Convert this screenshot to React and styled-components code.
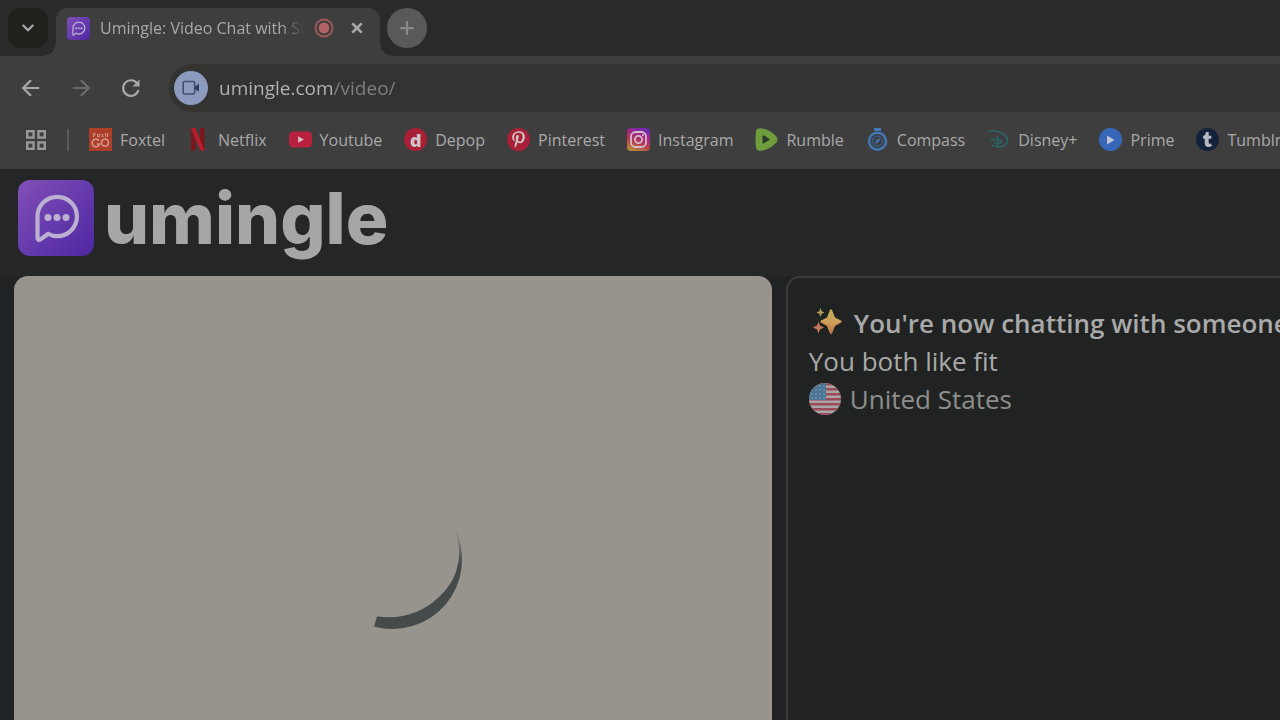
import React from "react";
import styled, { createGlobalStyle } from "styled-components";
import { FaPinterestP, FaTumblr } from "react-icons/fa";

const GlobalStyle = createGlobalStyle`
  *, *::before, *::after { box-sizing: border-box; }
  body {
    margin: 0;
    background: #242628;
    color: #a9a9a9;
    font-family: "Open Sans", "Noto Sans", sans-serif;
    overflow: hidden;
  }
  button { font: inherit; color: inherit; border: 0; padding: 0; cursor: pointer; }
  svg { display: block; flex: none; }
`;

const Page = styled.div`
  display: flex;
  flex-direction: column;
  min-height: 100vh;
`;

/* ---------- browser chrome ---------- */

const TabStrip = styled.div`
  display: flex;
  align-items: flex-end;
  height: 56px;
  padding-left: 8px;
  background: #2a2a2a;
`;

const TabSearch = styled.button`
  display: grid;
  place-items: center;
  width: 40px;
  height: 40px;
  margin: 0 8px 8px 0;
  border-radius: 12px;
  background: #21211e;
`;

const Tab = styled.div`
  position: relative;
  display: flex;
  align-items: center;
  gap: 10px;
  width: 324px;
  height: 48px;
  padding: 0 10px 8px 11px;
  border-radius: 12px 12px 0 0;
  background: #3e3e3e;

  &::before,
  &::after {
    content: "";
    position: absolute;
    bottom: 0;
    width: 12px;
    height: 12px;
  }
  &::before {
    left: -12px;
    background: radial-gradient(circle at 0 0, transparent 11px, #3e3e3e 12px);
  }
  &::after {
    right: -12px;
    background: radial-gradient(circle at 100% 0, transparent 11px, #3e3e3e 12px);
  }
`;

const TabTitle = styled.span`
  flex: 1;
  min-width: 0;
  overflow: hidden;
  white-space: nowrap;
  font-size: 16px;
  line-height: 24px;
  font-weight: 500;
  mask-image: linear-gradient(to right, #000 88%, transparent 100%);
`;

const IconButton = styled.button`
  display: grid;
  place-items: center;
  flex: none;
  width: ${(p) => p.$size}px;
  height: ${(p) => p.$size}px;
  border-radius: 50%;
  background: ${(p) => p.$fill || "transparent"};
  color: ${(p) => p.$tone || "#a9a9a9"};
`;

const NewTabSlot = styled.div`
  margin: 0 0 8px 7px;
`;

const Toolbar = styled.div`
  display: flex;
  align-items: center;
  gap: 10px;
  height: 64px;
  padding: 8px 0 8px 11px;
  background: #3e3e3e;
`;

const AddressBar = styled.div`
  display: flex;
  align-items: center;
  flex: 1;
  height: 48px;
  margin-left: 8px;
  padding-left: 5px;
  border-radius: 24px 0 0 24px;
  background: #333431;
`;

const AddressInput = styled.input`
  flex: 1;
  min-width: 0;
  height: 32px;
  margin-left: 11px;
  padding: 0;
  border: 0;
  outline: 0;
  font: 500 19px/32px "Open Sans", "Noto Sans", sans-serif;
  color: transparent;
  background: linear-gradient(to right, #b4b4b4 115px, #80807e 115px);
  background-clip: text;
  -webkit-background-clip: text;
`;

const Bookmarks = styled.nav`
  display: flex;
  align-items: center;
  gap: 20px;
  height: 49px;
  padding: 0 0 10px 25px;
  overflow: hidden;
  background: #3e3e3e;
`;

const BookmarkList = styled.div`
  display: flex;
  align-items: center;
  gap: 22px;
`;

const Divider = styled.span`
  flex: none;
  width: 2px;
  height: 22px;
  background: #595959;
`;

const Bookmark = styled.a`
  display: flex;
  align-items: center;
  flex: none;
  gap: 8px;
  color: #a9a9a9;
  font-size: 16px;
  line-height: 24px;
  font-weight: 500;
  text-decoration: none;
`;

const Badge = styled.span`
  display: grid;
  place-items: center;
  width: 23px;
  height: 23px;
  border-radius: 50%;
  background: ${(p) => p.$fill};
  color: ${(p) => p.$tone || "#cfc3c5"};
  font-size: 18px;
  line-height: 20px;
  font-weight: 800;
`;

/* ---------- site ---------- */

const SiteHeader = styled.header`
  display: flex;
  align-items: center;
  gap: 10px;
  height: 107px;
  padding: 0 18px 9px;
  background: #242628;
`;

const Wordmark = styled.h1`
  margin: 0;
  color: #a6a6a6;
  font: 800 71px/84px Inter, sans-serif;
`;

const Panels = styled.main`
  display: grid;
  grid-template-columns: 23fr 15fr;
  gap: 14px;
  flex: 1;
  padding-left: 14px;
  background: #202223;
`;

const VideoPanel = styled.section`
  display: flex;
  justify-content: center;
  padding-top: 215px;
  border-radius: 14px 14px 0 0;
  background: #97938d;
`;

const ChatPanel = styled.section`
  min-width: 0;
  padding: 26px 0 0 21px;
  overflow: hidden;
  border: solid #3b3d3d;
  border-width: 2px 0 0 2px;
  border-radius: 14px 0 0 0;
  background: #212322;
`;

const ChatLine = styled.p`
  display: flex;
  align-items: center;
  gap: ${(p) => p.$gap || 0}px;
  margin: 0;
  padding-left: ${(p) => p.$indent || 0}px;
  color: ${(p) => p.$tone || "#a9a9a9"};
  font-size: 26px;
  font-weight: ${(p) => p.$weight || 400};
  line-height: 38px;
  white-space: nowrap;
`;

/* ---------- drawings ---------- */

const ChatLogo = ({ size, id }) => (
  <svg width={size} height={size} viewBox="0 0 76 76" aria-hidden="true">
    <defs>
      <linearGradient id={id} x1="0" y1="0" x2="1" y2="1">
        <stop offset="0" stopColor="#8250b8" />
        <stop offset="0.5" stopColor="#663bad" />
        <stop offset="1" stopColor="#4f26a0" />
      </linearGradient>
    </defs>
    <rect width="76" height="76" rx="12" fill={`url(#${id})`} />
    <path
      d="M19.500 58V36.500a19.700 19.700 0 1 1 19.700 19.700c-3.500 0-6-.7-9-2.500L22.500 59.400Q19.500 61 19.500 58Z"
      fill="none"
      stroke="#bcb0d0"
      strokeWidth="4.200"
      strokeLinejoin="round"
    />
    <circle cx="30" cy="37.500" r="3.500" fill="#bcb0d0" />
    <circle cx="39" cy="37.500" r="3.500" fill="#bcb0d0" />
    <circle cx="48" cy="37.500" r="3.500" fill="#bcb0d0" />
  </svg>
);

const Stroke = ({ size = 22, d, width = 2 }) => (
  <svg width={size} height={size} viewBox="0 0 24 24" fill="none" stroke="currentColor" strokeWidth={width} aria-hidden="true">
    <path d={d} />
  </svg>
);

const Recording = () => (
  <svg width="20" height="20" viewBox="0 0 20 20" aria-hidden="true">
    <circle cx="10" cy="10" r="8.500" fill="none" stroke="#9f5a5d" strokeWidth="1.800" />
    <circle cx="10" cy="10" r="5.400" fill="#b36366" />
  </svg>
);

const ReloadIcon = () => (
  <svg width="24" height="24" viewBox="0 0 24 24" fill="none" aria-hidden="true">
    <path d="M18.300 7.500A7.800 7.800 0 1 0 19.500 14" stroke="currentColor" strokeWidth="2.200" />
    <path d="M20.500 3.500v7h-7Z" fill="currentColor" />
  </svg>
);

const CameraIcon = () => (
  <svg width="18" height="16" viewBox="0 0 18 16" aria-hidden="true">
    <rect x="1.200" y="1.500" width="11.500" height="12.500" rx="1.500" fill="none" stroke="#3f4f73" strokeWidth="1.600" />
    <path d="M12.500 7 17 3.800v8L12.500 8.800Z" fill="#2c3b60" />
  </svg>
);

const AppsIcon = () => (
  <svg width="22" height="22" viewBox="0 0 22 22" fill="none" stroke="#999" strokeWidth="2.400" aria-hidden="true">
    <rect x="2.200" y="2.200" width="6.400" height="6.400" />
    <rect x="13.400" y="2.200" width="6.400" height="6.400" />
    <rect x="2.200" y="13.400" width="6.400" height="6.400" />
    <rect x="13.400" y="13.400" width="6.400" height="6.400" />
  </svg>
);

const FoxtelIcon = () => (
  <svg width="23" height="23" viewBox="0 0 23 23" fill="none" stroke="#cf9589" aria-hidden="true">
    <rect width="23" height="23" fill="#ad3e28" stroke="none" />
    <path d="M4.500 5.500v3.500M4.500 5.500h2M4.500 7.300h2M8.500 6.500h2v2.200h-2ZM12.500 6l2 3M14.500 6l-2 3M16.500 5v4M18.500 5v4" strokeWidth="1" />
    <path d="M10 12.700a3.800 3.800 0 1 0 .6 3.300H7.800" strokeWidth="1.700" />
    <circle cx="16" cy="14.700" r="3.500" strokeWidth="1.700" />
  </svg>
);

const NetflixIcon = () => (
  <svg width="23" height="23" viewBox="0 0 23 23" aria-hidden="true">
    <path d="M4 0h4.500v22l-4.500 1ZM13 0h4.500v23l-4.500-1Z" fill="#7b161d" />
    <path d="M4 0h4.500l9 23-4.500-1Z" fill="#b5202b" />
  </svg>
);

const YoutubeIcon = () => (
  <svg width="23" height="23" viewBox="0 0 23 23" aria-hidden="true">
    <rect y="3.500" width="23" height="16" rx="4.500" fill="#b9213e" />
    <path d="M9.200 8.300v6.500l5.600-3.250Z" fill="#cfc0c2" />
  </svg>
);

const InstagramIcon = () => (
  <svg width="23" height="23" viewBox="0 0 23 23" fill="none" aria-hidden="true">
    <defs>
      <linearGradient id="insta" x1="0.300" y1="1" x2="0.700" y2="0">
        <stop offset="0" stopColor="#b68a38" />
        <stop offset="0.350" stopColor="#b83b4d" />
        <stop offset="0.700" stopColor="#a2268a" />
        <stop offset="1" stopColor="#6a2bb0" />
      </linearGradient>
    </defs>
    <rect width="23" height="23" rx="4" fill="url(#insta)" />
    <rect x="4" y="4" width="15" height="15" rx="4.500" stroke="#d2bccb" strokeWidth="1.800" />
    <circle cx="11.500" cy="11.500" r="3.600" stroke="#d2bccb" strokeWidth="1.800" />
    <circle cx="16" cy="7" r="1" fill="#d2bccb" />
  </svg>
);

const RumbleIcon = () => (
  <svg width="23" height="23" viewBox="0 0 23 23" aria-hidden="true">
    <path d="M1 4Q1 0 5.500 .3Q14 1 20.500 7.500Q24.500 11.500 20.500 15.500Q14 22 5.500 22.800Q1 23 1 19Q0 11.500 1 4Z" fill="#6f9d3b" />
    <path d="M7.500 8.300q0-1.500 1.400-.8l5 2.900q1.200.9 0 1.800l-5 3.100Q7.500 16 7.500 14.500Z" fill="#263a2c" />
  </svg>
);

const CompassIcon = () => (
  <svg width="23" height="23" viewBox="0 0 23 23" fill="none" stroke="#4278b7" aria-hidden="true">
    <path d="M8 1.500h7" strokeWidth="3" />
    <circle cx="11.500" cy="13.200" r="8.500" strokeWidth="2.400" />
    <circle cx="11.500" cy="13.200" r="5" stroke="#355f91" strokeWidth="1.200" />
    <path d="m8.500 16 2-4 4-2-2 4Z" fill="#4278b7" stroke="none" />
  </svg>
);

const DisneyIcon = () => (
  <svg width="23" height="23" viewBox="0 0 23 23" fill="none" stroke="#2d6262" strokeWidth="1.700" strokeLinecap="round" aria-hidden="true">
    <path d="M2 3.500C9 1 20.500 6 20.500 12.500S12 20 5.500 17.500" />
    <path d="M10.500 8.500v10.500M4.500 12.500c2.500-1.500 8-1.500 9.500.5s-2 3.500-6.500 2" />
  </svg>
);

const PlayIcon = () => (
  <svg width="9" height="10" viewBox="0 0 9 10" aria-hidden="true">
    <path d="M1 .5v9L8.500 5Z" fill="#bcc5d8" />
  </svg>
);

const Spinner = () => (
  <svg width="138" height="138" viewBox="0 0 138 138" overflow="visible" role="img" aria-label="Loading">
    <defs>
      <linearGradient id="fade" x1="0" y1="0" x2="0" y2="1">
        <stop offset="0" stopColor="#454a4b" stopOpacity="0.100" />
        <stop offset="0.350" stopColor="#454a4b" />
        <stop offset="1" stopColor="#454a4b" />
      </linearGradient>
    </defs>
    <path d="M50 135.500A69.500 69.500 0 0 0 131 38Q139 60 132 81Q127 95 115 106Q90 130 53 125.500Z" fill="url(#fade)" />
  </svg>
);

const Sparkles = () => (
  <svg width="30" height="30" viewBox="0 0 30 30" aria-hidden="true">
    <defs>
      <linearGradient id="spark" x1="0" y1="0" x2="0" y2="1">
        <stop offset="0" stopColor="#c3ad5c" />
        <stop offset="0.500" stopColor="#cfa158" />
        <stop offset="1" stopColor="#bc7049" />
      </linearGradient>
    </defs>
    <path d="M17 2Q18 .5 19 2L22 9.500 28 12.500Q29.500 13.500 28 14.500L22 18 19 25.500Q18 27 17 25.500L14 18 8 14.500Q6.500 13.500 8 12.500L14 9.500Z" fill="url(#spark)" />
    <path d="m7.500 0 1.200 3.300L11.500 4.500 8.700 5.700 7.500 9 6.300 5.700 3.500 4.500 6.300 3.300Z" fill="#b69e58" />
    <path d="m5.500 13.500 1.500 4L11 19.500 7 21.500 5.500 25.500 4 21.500 0 19.500 4 17.500Z" fill="#bf775b" />
  </svg>
);

const stars = [3, 7, 11, 15].flatMap((x) => [3, 7, 11, 15].map((y) => [x, y]));

const FlagUS = () => (
  <svg width="32" height="32" viewBox="0 0 32 32" aria-hidden="true">
    <defs>
      <clipPath id="round"><circle cx="16" cy="16" r="16" /></clipPath>
    </defs>
    <g clipPath="url(#round)">
      <rect width="32" height="32" fill="#aaa4a7" />
      {[0, 5, 10, 15, 20, 25, 30].map((y) => (
        <rect key={y} y={y} width="32" height="2.500" fill="#9a4b58" />
      ))}
      <rect width="17" height="17" fill="#4a7694" />
      {stars.map(([x, y]) => (
        <circle key={`${x}-${y}`} cx={x} cy={y} r="0.800" fill="#87a0ae" />
      ))}
    </g>
  </svg>
);

const bookmarks = [
  { label: "Foxtel", icon: <FoxtelIcon /> },
  { label: "Netflix", icon: <NetflixIcon /> },
  { label: "Youtube", icon: <YoutubeIcon /> },
  { label: "Depop", icon: <Badge $fill="#a81f37" aria-hidden="true">d</Badge> },
  { label: "Pinterest", icon: <Badge $fill="#a81f37"><FaPinterestP size={17} /></Badge> },
  { label: "Instagram", icon: <InstagramIcon /> },
  { label: "Rumble", icon: <RumbleIcon /> },
  { label: "Compass", icon: <CompassIcon /> },
  { label: "Disney+", icon: <DisneyIcon /> },
  { label: "Prime", icon: <Badge $fill="#3767b8"><PlayIcon /></Badge> },
  { label: "Tumblr", icon: <Badge $fill="#14213a" $tone="#b3b8c1"><FaTumblr size={15} /></Badge> },
];

export default function App() {
  return (
    <Page>
      <GlobalStyle />
      <TabStrip>
        <TabSearch aria-label="Search tabs">
          <Stroke size={18} d="m5 8 7 7 7-7" width={3} />
        </TabSearch>
        <Tab>
          <ChatLogo size={23} id="tabLogo" />
          <TabTitle>Umingle: Video Chat with Strangers</TabTitle>
          <Recording />
          <IconButton $size={26} aria-label="Close tab">
            <Stroke size={16} d="m5 5 14 14M19 5 5 19" width={4} />
          </IconButton>
        </Tab>
        <NewTabSlot>
          <IconButton $size={40} $fill="#595959" $tone="#898989" aria-label="New tab">
            <Stroke size={18} d="M12 3v18M3 12h18" width={3} />
          </IconButton>
        </NewTabSlot>
      </TabStrip>

      <Toolbar>
        <IconButton $size={40} aria-label="Back">
          <Stroke d="M21 12H4M12 3.500 3.500 12l8.500 8.500" width={2.4} />
        </IconButton>
        <IconButton $size={40} $tone="#6b6b6b" aria-label="Forward">
          <Stroke d="M3 12h17M12 3.500l8.500 8.500-8.500 8.500" width={2.4} />
        </IconButton>
        <IconButton $size={40} aria-label="Reload">
          <ReloadIcon />
        </IconButton>
        <AddressBar>
          <IconButton $size={34} $fill="#8c9abd" aria-label="Camera in use">
            <CameraIcon />
          </IconButton>
          <AddressInput aria-label="Address" defaultValue="umingle.com/video/" spellCheck={false} />
        </AddressBar>
      </Toolbar>

      <Bookmarks aria-label="Bookmarks">
        <IconButton $size={22} aria-label="Apps"><AppsIcon /></IconButton>
        <Divider />
        <BookmarkList>
          {bookmarks.map((b) => (
            <Bookmark key={b.label} href="#">
              {b.icon}
              {b.label}
            </Bookmark>
          ))}
        </BookmarkList>
      </Bookmarks>

      <SiteHeader>
        <ChatLogo size={76} id="siteLogo" />
        <Wordmark>umingle</Wordmark>
      </SiteHeader>

      <Panels>
        <VideoPanel aria-label="Video">
          <Spinner />
        </VideoPanel>
        <ChatPanel aria-label="Chat">
          <ChatLine $gap={11} $indent={4} $weight={600}>
            <Sparkles />
            You're now chatting with someone
          </ChatLine>
          <ChatLine>You both like fit</ChatLine>
          <ChatLine $gap={9} $tone="#8d8e8d">
            <FlagUS />
            United States
          </ChatLine>
        </ChatPanel>
      </Panels>
    </Page>
  );
}
